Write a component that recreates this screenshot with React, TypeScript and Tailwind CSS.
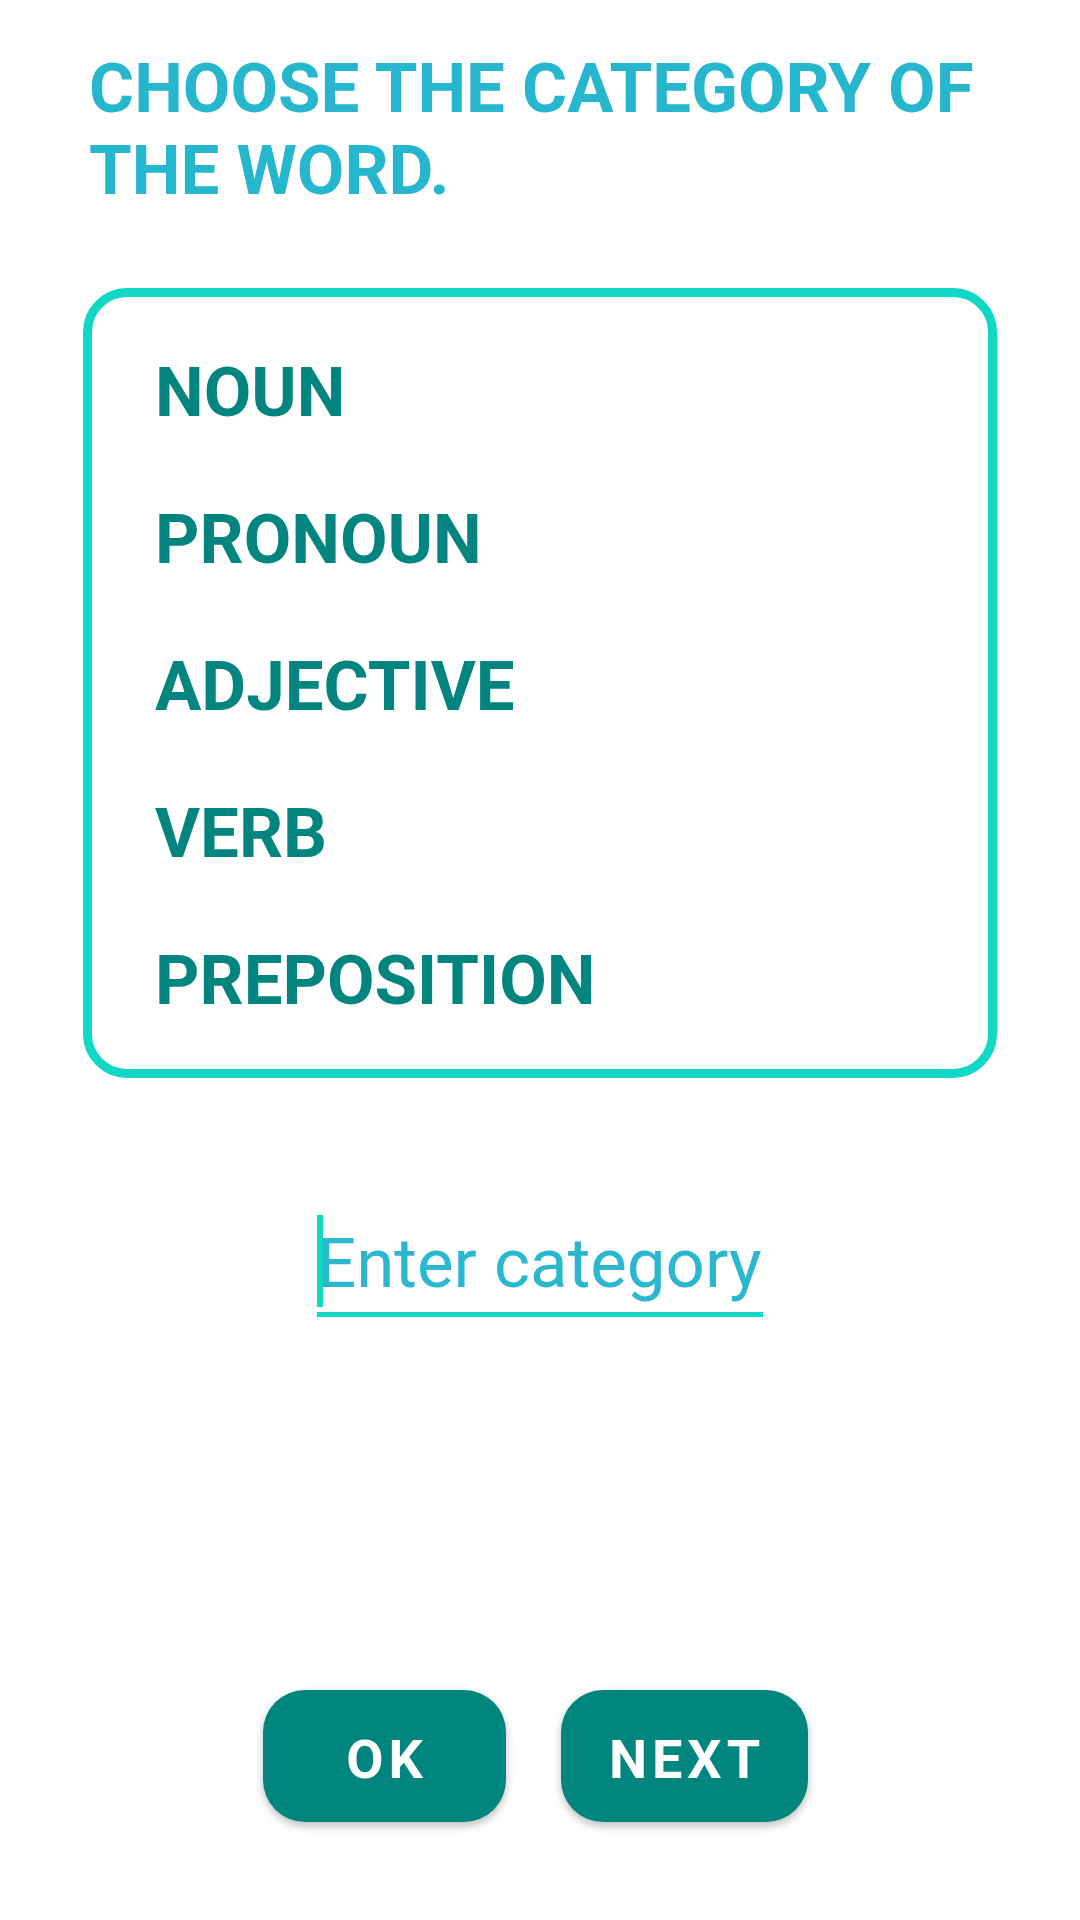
const categories = ['NOUN', 'PRONOUN', 'ADJECTIVE', 'VERB', 'PREPOSITION'];

const App = () => {
  return (
    <div className="w-[1080px] min-h-[1920px] bg-white font-['Roboto',sans-serif] flex flex-col">
      <h1 className="mt-[48px] ml-[89px] text-[69px] leading-[82px] font-bold text-[#26b7cf] whitespace-nowrap">
        CHOOSE THE CATEGORY OF
        <br />
        THE WORD.
      </h1>

      <div className="mt-[76px] ml-[83px] w-[914px] h-[790px] border-[9px] border-[#10d8c5] rounded-[44px] pl-[63px] pt-[56px] flex flex-col gap-[67px]">
        {categories.map((c) => (
          <div key={c} className="text-[69px] leading-[80px] font-bold text-[#03857f]">
            {c}
          </div>
        ))}
      </div>

      <div className="mt-[137px] self-center relative w-[446px] border-b-[5px] border-[#10d8c5]">
        <span className="absolute left-0 top-0 w-[6px] h-[92px] bg-[#10d8c5]"></span>
        <div className="text-[69px] leading-[97px] text-[#2ab7cf]">Enter category</div>
      </div>

      <div className="mt-[373px] flex pl-[263px] gap-[55px]">
        <button className="w-[243px] h-[132px] rounded-[42px] bg-[#01867f] text-white text-[54px] font-bold tracking-[5px] shadow-[0_4px_8px_rgba(0,0,0,0.25)] flex items-center justify-center pl-[5px] pt-[6px]">
          OK
        </button>
        <button className="w-[247px] h-[132px] rounded-[42px] bg-[#01867f] text-white text-[54px] font-bold tracking-[5px] shadow-[0_4px_8px_rgba(0,0,0,0.25)] flex items-center justify-center pl-[5px] pt-[6px]">
          NEXT
        </button>
      </div>
    </div>
  );
};

export default App;
